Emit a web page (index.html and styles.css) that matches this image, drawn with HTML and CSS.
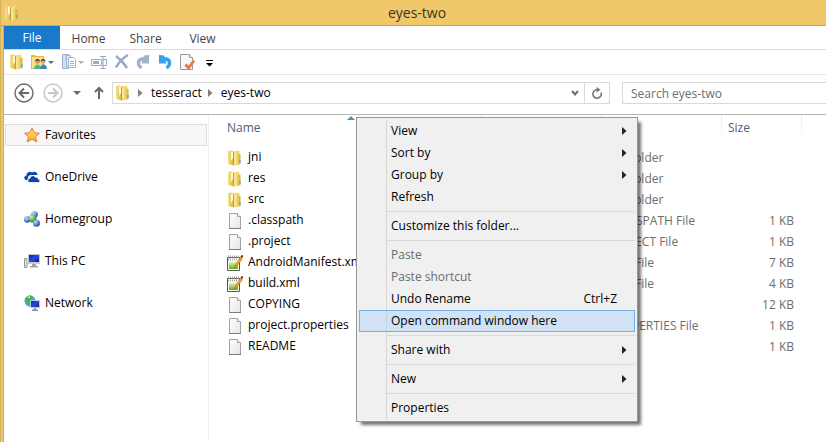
FILE: index.html
```html
<!DOCTYPE html>
<html lang="en">
  <head>
    <meta charset="UTF-8" />
    <meta name="viewport" content="width=device-width, initial-scale=1.0" />
    <title>eyes-two</title>
    <link rel="stylesheet" href="styles.css" />
  </head>
  <body>
    <!-- shared icons -->
    <svg class="sprite" aria-hidden="true">
      <defs>
        <linearGradient id="gold" x1="0" x2="1">
          <stop offset="0" stop-color="#f6e48c" />
          <stop offset="1" stop-color="#d6ae38" />
        </linearGradient>
        <linearGradient id="paper" x1="0" y1="0" x2="1" y2="1">
          <stop offset="0" stop-color="#fff" />
          <stop offset="1" stop-color="#e4e4e4" />
        </linearGradient>
        <linearGradient id="leaf" x1="0" y1="0" x2="0" y2="1">
          <stop offset="0" stop-color="#e8f5b8" />
          <stop offset="1" stop-color="#4fb318" />
        </linearGradient>
        <linearGradient id="screen" x1="0" y1="0" x2="1" y2="1">
          <stop offset="0" stop-color="#0a1c9c" />
          <stop offset="0.5" stop-color="#2a49e0" />
          <stop offset="1" stop-color="#0a1590" />
        </linearGradient>
        <linearGradient id="sun" x1="0" y1="0" x2="0" y2="1">
          <stop offset="0" stop-color="#ffe98a" />
          <stop offset="1" stop-color="#ffa41c" />
        </linearGradient>
        <radialGradient id="ball" cx="0.35" cy="0.3" r="0.7">
          <stop offset="0" stop-color="#c9dcff" />
          <stop offset="1" stop-color="#2c4fae" />
        </radialGradient>
        <radialGradient id="greenball" cx="0.35" cy="0.3" r="0.7">
          <stop offset="0" stop-color="#d2f7c0" />
          <stop offset="1" stop-color="#178a1c" />
        </radialGradient>
      </defs>
      <symbol id="folder" viewBox="0 0 16 16">
        <path d="M1 1l4-.500L7 2v13.500L1 14z" fill="url(#gold)" />
        <path d="M4 1.500h2V8L4 11z" fill="#fff9d8" />
        <path d="M6.500 1.500L11.500.5l1 1V14l-5 1.500h-1z" fill="#f0d873" />
        <path d="M8.500 3l5 1v10l-5 1.500z" fill="url(#gold)" />
        <path d="M8 2.500v12" stroke="#fbf0b4" />
        <path d="M6.500 2v13" stroke="#c29f35" />
        <path d="M12.500 10h1v3h-1z" fill="#3f9bd8" />
      </symbol>
      <symbol id="file" viewBox="0 0 16 16">
        <path d="M2.500.5h8l3 3v12h-11z" fill="url(#paper)" stroke="#a2a2a2" />
        <path d="M10.500.5v3h3" fill="#fff" stroke="#a2a2a2" />
        <path d="M2 15.500h12" stroke="#7d7d7d" />
      </symbol>
      <symbol id="notepad" viewBox="0 0 16 16">
        <path d="M.5 2.500h12v13H.5z" fill="#fff" stroke="#54594f" />
        <path d="M2 7h9v7H2z" fill="url(#leaf)" />
        <path d="M1 4.500h10M1 1.500h11" stroke="#a4a7a0" stroke-dasharray="1 1" stroke-width="2" />
        <path d="M7.500 13l.8-3 5-7.500 2 1.300L10 11z" fill="#f6a91d" stroke="#a9640c" stroke-width=".6" />
        <path d="M13.500 2l.8-1.700H16v1.500L15 3z" fill="#8c1812" />
      </symbol>
      <symbol id="caret" viewBox="0 0 5 8">
        <path d="M0 0l4.500 4L0 8z" fill="currentColor" />
      </symbol>
      <symbol id="drop" viewBox="0 0 8 4">
        <path d="M0 0h8L4 4z" fill="currentColor" />
      </symbol>
    </svg>

    <div class="window">
      <header class="titlebar">
        <svg class="icon"><use href="#folder" /></svg>
        <h1>eyes-two</h1>
      </header>

      <nav class="tabs" aria-label="Ribbon">
        <button class="tab tab-file">File</button>
        <button class="tab">Home</button>
        <button class="tab">Share</button>
        <button class="tab">View</button>
      </nav>

      <div class="toolbar">
        <button aria-label="New folder"><svg class="icon"><use href="#folder" /></svg></button>
        <button aria-label="Share with group">
          <svg class="icon" viewBox="0 0 16 16">
            <path d="M0 1h4l1 1h8v13H0z" fill="#e3ba3a" />
            <path d="M1 3h11v11H1z" fill="#f8e189" />
            <circle cx="6.500" cy="7.500" r="2.300" fill="#c99569" />
            <path d="M4 7.500C4 4 9 4 9 7.500L8 6.500H5z" fill="#3c2c22" />
            <path d="M3 15c0-6 7-6 7 0z" fill="#4db792" />
            <circle cx="12" cy="7.500" r="2.300" fill="#d7a57b" />
            <path d="M9.600 7.500c0-3.500 5-3.500 5 0l-1-1h-3z" fill="#30261f" />
            <path d="M9 15c0-6 7-6 7 0z" fill="#3d85b5" />
          </svg>
          <svg class="drop blue"><use href="#drop" /></svg>
        </button>
        <button aria-label="Copy">
          <svg class="icon" viewBox="0 0 16 16" fill="#e9eef7" stroke="#9fb1d2">
            <path d="M1.500.5h6v14h-6z" fill="#cfdaee" />
            <path d="M5.500 1.500h4v11h-4z" />
            <path d="M7.500 3.500h5l2 2v8h-7z" fill="#fff" />
            <path d="M9 7.500h4M9 9.500h4M9 11.500h4" />
          </svg>
          <svg class="drop pale"><use href="#drop" /></svg>
        </button>
        <button aria-label="Rename">
          <svg class="icon" viewBox="0 0 16 16" fill="none" stroke="#98abc9">
            <path d="M.5 5.500h10v6H.5zM12 5.500h3.500v6H12" />
            <path d="M2 7h6v3H2z" fill="#98abc9" stroke="none" />
            <path d="M9 2.500h2.500l.5.500.5-.5H15M9 14.500h2.500l.5-.5.5.5H15M12 3v11" stroke-width="1.200" />
          </svg>
        </button>
        <button aria-label="Delete">
          <svg class="icon" viewBox="0 0 16 16" fill="none" stroke="#9aa9c6">
            <path d="M3 2c4 3 8 7 11 12" stroke-width="2.500" />
            <path d="M15 1C10 4 6 8 3 13.500" stroke-width="2.500" />
          </svg>
        </button>
        <button aria-label="Redo">
          <svg class="icon" viewBox="0 0 16 16">
            <path d="M11 5H8C2.500 5 2 10.500 6.500 14" fill="none" stroke="#a5b2cb" stroke-width="3.400" />
            <path d="M9 1.500l5-.5v8.500H6.500z" fill="#a5b2cb" />
          </svg>
        </button>
        <button aria-label="Undo">
          <svg class="icon" viewBox="0 0 16 16">
            <path d="M5 5h3c5.500 0 6 5.500 1.500 9" fill="none" stroke="#36a2ea" stroke-width="3.400" />
            <path d="M2 1l5 .5L9.500 9.500H2z" fill="#36a2ea" />
          </svg>
        </button>
        <button aria-label="Properties">
          <svg class="icon" viewBox="0 0 16 16">
            <path d="M1.500.5h9l3 3v12h-12z" fill="#f8f8f8" stroke="#999" />
            <path d="M10.500.5v3h3" fill="#fff" stroke="#999" />
            <path d="M6.500 10.500l3 3.500L15 6.500" fill="none" stroke="#ec7446" stroke-width="2.800" />
          </svg>
        </button>
        <button aria-label="Customize toolbar">
          <svg class="icon" viewBox="0 0 16 16">
            <path d="M5 6h7v1H5zM5 9h7l-3.500 3.500z" />
          </svg>
        </button>
      </div>

      <div class="location">
        <div class="history">
          <button aria-label="Back">
            <svg class="round" viewBox="0 0 20 20" fill="none" stroke="#686868">
              <circle cx="10" cy="10" r="9" stroke-width="1.400" />
              <path d="M15 10H6M10 5.500L5.500 10l4.500 4.500" stroke-width="2" />
            </svg>
          </button>
          <button aria-label="Forward" disabled>
            <svg class="round" viewBox="0 0 20 20" fill="none" stroke="#c6c6c6">
              <circle cx="10" cy="10" r="9" stroke-width="1.400" />
              <path d="M5 10h9M10 5.500l4.500 4.500-4.500 4.500" stroke-width="2" />
            </svg>
          </button>
          <button class="recent" aria-label="Recent locations"><svg class="drop"><use href="#drop" /></svg></button>
          <button aria-label="Up">
            <svg class="icon" viewBox="0 0 16 16" fill="none" stroke="#686868" stroke-width="2">
              <path d="M8 14V3M4 7l4-4 4 4" />
            </svg>
          </button>
        </div>
        <div class="address">
          <svg class="icon"><use href="#folder" /></svg>
          <svg class="caret"><use href="#caret" /></svg>
          <a href="#tesseract">tesseract</a>
          <svg class="caret"><use href="#caret" /></svg>
          <a href="#eyes-two">eyes-two</a>
          <button class="expand" aria-label="Previous locations">
            <svg viewBox="0 0 8 8" fill="none" stroke="#6d6d6d" stroke-width="2"><path d="M1 2l3 3.500L7 2" /></svg>
          </button>
          <button class="refresh" aria-label="Refresh">
            <svg viewBox="0 0 12 12" fill="none" stroke="#777" stroke-width="1.600">
              <path d="M10 5.500A4.200 4.200 0 1 1 6 2.800" />
              <path d="M5.500 0v5.600L9.500 2.800z" fill="#777" stroke="none" />
            </svg>
          </button>
        </div>
        <input class="search" type="search" aria-label="Search eyes-two" placeholder="Search eyes-two" />
      </div>

      <main class="content">
        <nav class="sidebar" aria-label="Places">
          <a class="place selected" href="#favorites">
            <svg class="icon" viewBox="0 0 16 16">
              <path d="M8 .8l2.200 4.900 5.300.6-4 3.500 1.300 5.200L8 12.300 3.200 15l1.300-5.200-4-3.500 5.300-.6z" fill="url(#sun)" stroke="#d9812e" />
            </svg>
            Favorites
          </a>
          <a class="place" href="#onedrive">
            <svg class="icon" viewBox="0 0 16 16" fill="#0b48a8">
              <path d="M3 11.500c-3-.5-4-4-.5-5C2.500 3 6 2 8 3.500c3-2 5.500 0 5.500 2.500L8 6c-3 0-4 1-4 3z" />
              <path d="M6 13.500c-3 0-3-4 0-4.200 0-3 4.500-3.500 5.500-1 2-.5 2.800.5 2.800 2 2.200.2 2.200 3.200 0 3.200z" stroke="#fff" stroke-width=".8" />
            </svg>
            OneDrive
          </a>
          <a class="place" href="#homegroup">
            <svg class="icon" viewBox="0 0 16 16">
              <circle cx="10.500" cy="3.500" r="3.300" fill="url(#ball)" />
              <circle cx="3.200" cy="8.500" r="3.200" fill="url(#ball)" />
              <circle cx="8.500" cy="7.500" r="4" fill="url(#greenball)" />
              <circle cx="12.500" cy="12.200" r="3.500" fill="url(#ball)" />
            </svg>
            Homegroup
          </a>
          <a class="place" href="#this-pc">
            <svg class="icon" viewBox="0 0 16 16">
              <path d="M.5 5.500H3v9H.5z" fill="#ddd" stroke="#999" />
              <path d="M4 1h12v10H4z" fill="#c9c9c9" />
              <path d="M5 2h10v7H5z" fill="url(#screen)" />
              <path d="M8 11h4v2h2v1.500H6V13h2z" fill="#a3a3a3" />
            </svg>
            This PC
          </a>
          <a class="place" href="#network">
            <svg class="icon" viewBox="0 0 16 16">
              <circle cx="6" cy="6" r="5.500" fill="#41a9dd" />
              <path d="M2 2.500C5-.5 8 0 9 2L6 4l1 3-3 3-2-4-1.500-1z" fill="#42b649" />
              <path d="M3 2.500l3-1.500v2z" fill="#d4f5d4" />
              <path d="M6.500 5.500h9v7h-9z" fill="url(#screen)" stroke="#b9c7dd" />
              <path d="M10 13h2v1.500h2V16H8v-1.500h2z" fill="#8795a8" />
            </svg>
            Network
          </a>
        </nav>

        <table class="files">
          <colgroup>
            <col class="col-name" />
            <col class="col-date" />
            <col class="col-type" />
            <col class="col-size" />
            <col />
          </colgroup>
          <thead>
            <tr>
              <th class="sorted" scope="col">
                Name
                <svg class="sort" viewBox="0 0 8 4"><path d="M0 4l4-4 4 4z" fill="#4d8fb5" /></svg>
              </th>
              <td></td>
              <td></td>
              <th scope="col">Size</th>
              <td></td>
            </tr>
          </thead>
          <tbody>
            <tr>
              <td class="name"><svg class="icon"><use href="#folder" /></svg>jni</td>
              <td></td>
              <td>File folder</td>
              <td class="size"></td>
              <td></td>
            </tr>
            <tr>
              <td class="name"><svg class="icon"><use href="#folder" /></svg>res</td>
              <td></td>
              <td>File folder</td>
              <td class="size"></td>
              <td></td>
            </tr>
            <tr>
              <td class="name"><svg class="icon"><use href="#folder" /></svg>src</td>
              <td></td>
              <td>File folder</td>
              <td class="size"></td>
              <td></td>
            </tr>
            <tr>
              <td class="name"><svg class="icon"><use href="#file" /></svg>.classpath</td>
              <td></td>
              <td>CLASSPATH File</td>
              <td class="size">1 KB</td>
              <td></td>
            </tr>
            <tr>
              <td class="name"><svg class="icon"><use href="#file" /></svg>.project</td>
              <td></td>
              <td>PROJECT File</td>
              <td class="size">1 KB</td>
              <td></td>
            </tr>
            <tr>
              <td class="name"><svg class="icon"><use href="#notepad" /></svg>AndroidManifest.xml</td>
              <td></td>
              <td>XML File</td>
              <td class="size">7 KB</td>
              <td></td>
            </tr>
            <tr>
              <td class="name"><svg class="icon"><use href="#notepad" /></svg>build.xml</td>
              <td></td>
              <td>XML File</td>
              <td class="size">4 KB</td>
              <td></td>
            </tr>
            <tr>
              <td class="name"><svg class="icon"><use href="#file" /></svg>COPYING</td>
              <td></td>
              <td></td>
              <td class="size">12 KB</td>
              <td></td>
            </tr>
            <tr>
              <td class="name"><svg class="icon"><use href="#file" /></svg>project.properties</td>
              <td></td>
              <td>PROPERTIES File</td>
              <td class="size">1 KB</td>
              <td></td>
            </tr>
            <tr>
              <td class="name"><svg class="icon"><use href="#file" /></svg>README</td>
              <td></td>
              <td></td>
              <td class="size">1 KB</td>
              <td></td>
            </tr>
          </tbody>
        </table>
      </main>

      <div class="menu" role="menu">
        <button role="menuitem">View<svg class="caret"><use href="#caret" /></svg></button>
        <button role="menuitem">Sort by<svg class="caret"><use href="#caret" /></svg></button>
        <button role="menuitem">Group by<svg class="caret"><use href="#caret" /></svg></button>
        <button role="menuitem">Refresh</button>
        <hr />
        <button role="menuitem">Customize this folder...</button>
        <hr />
        <button role="menuitem" disabled>Paste</button>
        <button role="menuitem" disabled>Paste shortcut</button>
        <button role="menuitem">Undo Rename<span class="shortcut">Ctrl+Z</span></button>
        <button role="menuitem" class="active">Open command window here</button>
        <hr />
        <button role="menuitem">Share with<svg class="caret"><use href="#caret" /></svg></button>
        <hr />
        <button role="menuitem">New<svg class="caret"><use href="#caret" /></svg></button>
        <hr />
        <button role="menuitem">Properties</button>
      </div>
    </div>
  </body>
</html>
```
FILE: styles.css
```css
* {
  box-sizing: border-box;
}
body {
  margin: 0;
  font-family: "Segoe UI", "Open Sans", "Noto Sans", sans-serif;
  font-size: 12px;
  line-height: 16px;
  color: #000;
}
button {
  padding: 0;
  border: none;
  background: none;
  font: inherit;
  color: inherit;
}
a {
  color: inherit;
  text-decoration: none;
}
svg {
  display: block;
  flex: none;
}
.sprite {
  position: absolute;
  width: 0;
  height: 0;
}
.icon {
  width: 16px;
  height: 16px;
}
.caret {
  width: 5px;
  height: 8px;
}
.drop {
  width: 8px;
  height: 4px;
  color: #686868;
}

.window {
  position: relative;
  display: flex;
  flex-direction: column;
  min-height: 100vh;
  overflow: hidden;
  padding-left: 4px;
  background: linear-gradient(to right, #d3b060 1px, #f0c869 1px, #f0c869 3px, #d0ab55 3px, #d0ab55 4px, #fff 4px);
}
.titlebar {
  display: flex;
  align-items: center;
  height: 26px;
  margin-left: -3px;
  padding: 0 12px 0 3px;
  background: #f0c869;
  border-bottom: 1px solid #c9a84f;
}
.titlebar h1 {
  flex: 1;
  margin: 0;
  font-size: 14px;
  font-weight: normal;
  line-height: 20px;
  text-align: center;
  color: #3b3424;
}

.tabs {
  display: flex;
  height: 24px;
  border-bottom: 1px solid #dadbdc;
}
.tab {
  width: 57px;
  padding-top: 2px;
  color: #444;
}
.tab-file {
  width: 56px;
  padding-top: 0;
  background: #1979ca;
  color: #fff;
}

.toolbar {
  display: flex;
  align-items: center;
  gap: 6px;
  height: 25px;
  padding-left: 5px;
  border-bottom: 1px solid #e8e8e9;
}
.toolbar button {
  display: flex;
  align-items: center;
}
.toolbar .drop {
  width: 6px;
  height: 3px;
  margin: 0 1px;
}
.toolbar .blue {
  color: #4472a8;
}
.toolbar .pale {
  color: #a9adb5;
}

.location {
  display: flex;
  align-items: center;
  height: 40px;
  padding: 0 0 3px 10px;
  border-bottom: 1px solid #b4b4b4;
}
.history {
  display: flex;
  align-items: center;
  gap: 9px;
}
.recent {
  padding: 0 1px;
}
.round {
  width: 20px;
  height: 20px;
}
.address {
  flex: 1;
  display: flex;
  align-items: center;
  height: 22px;
  margin: 0 12px 0 5px;
  padding-left: 2px;
  border: 1px solid #d9d9d9;
}
.address .caret {
  margin: 0 8px 0 7px;
  color: #808080;
}
.address a + .caret {
  margin: 0 8px 0 6px;
}
.address button {
  display: flex;
  align-items: center;
  justify-content: center;
  align-self: stretch;
}
.expand {
  width: 18px;
  margin-left: auto;
}
.expand svg {
  width: 8px;
  height: 8px;
}
.refresh {
  width: 25px;
  border-left: 1px solid #d9d9d9;
}
.refresh svg {
  width: 12px;
  height: 12px;
}
.search {
  flex: 0 0 204px;
  height: 22px;
  padding: 0 8px;
  border: 1px solid #d9d9d9;
  border-right: none;
  border-radius: 0;
  font: inherit;
}
.search::placeholder {
  color: #6d6d6d;
}

.content {
  flex: 1;
  display: flex;
}
.sidebar {
  flex: 0 0 205px;
  display: flex;
  flex-direction: column;
  gap: 20px;
  padding: 9px 1px 0;
  border-right: 1px solid #f2f2f2;
}
.place {
  display: flex;
  align-items: center;
  gap: 5px;
  height: 22px;
  padding-left: 18px;
  border: 1px solid transparent;
}
.selected {
  background: #f7f7f7;
  border-color: #dedede;
}

.files {
  flex: 1;
  align-self: flex-start;
  table-layout: fixed;
  width: 100%;
  margin-left: 12px;
  border-collapse: collapse;
  color: #6d6d6d;
}
.col-name {
  width: 261px;
}
.col-date,
.col-type {
  width: 120px;
}
.col-size {
  width: 80px;
}
.files th,
.files td {
  height: 21px;
  padding: 0 6px;
  font-weight: normal;
  text-align: left;
  white-space: nowrap;
}
.files thead th,
.files thead td {
  height: 32px;
  padding-bottom: 6px;
  color: #4c607a;
  background: linear-gradient(#dfe8f2, #fff) right top / 1px 22px no-repeat;
}
.files thead td:last-child {
  background: none;
}
.files .sorted {
  position: relative;
}
.sort {
  position: absolute;
  top: 1px;
  left: calc(50% - 5px);
  width: 8px;
  height: 4px;
}
.files .name {
  color: #000;
}
.name .icon {
  display: inline-block;
  margin-right: 5px;
  vertical-align: middle;
}
.files .size {
  padding-right: 8px;
  text-align: right;
}

.menu {
  position: absolute;
  top: 117px;
  left: 356px;
  width: 282px;
  padding: 2px;
  border: 1px solid #979797;
  background: linear-gradient(#d7d7d7, #d7d7d7) 29px 2px / 1px calc(100% - 4px) no-repeat #f0f0f0;
  box-shadow: 4px 4px 3px -1px rgba(0, 0, 0, 0.55);
}
.menu button {
  display: flex;
  align-items: center;
  width: 100%;
  height: 22px;
  padding: 0 7px 0 31px;
  border: 1px solid transparent;
}
.menu button:disabled {
  color: #6d6d6d;
}
.menu .active {
  background: rgba(150, 200, 250, 0.35);
  border-color: #78aee5;
}
.menu .caret {
  margin-left: auto;
  color: #222;
}
.menu .shortcut {
  margin-left: auto;
  padding-right: 10px;
}
.menu hr {
  height: 1px;
  margin: 3px 0 3px 27px;
  border: none;
  background: #d7d7d7;
}
```
